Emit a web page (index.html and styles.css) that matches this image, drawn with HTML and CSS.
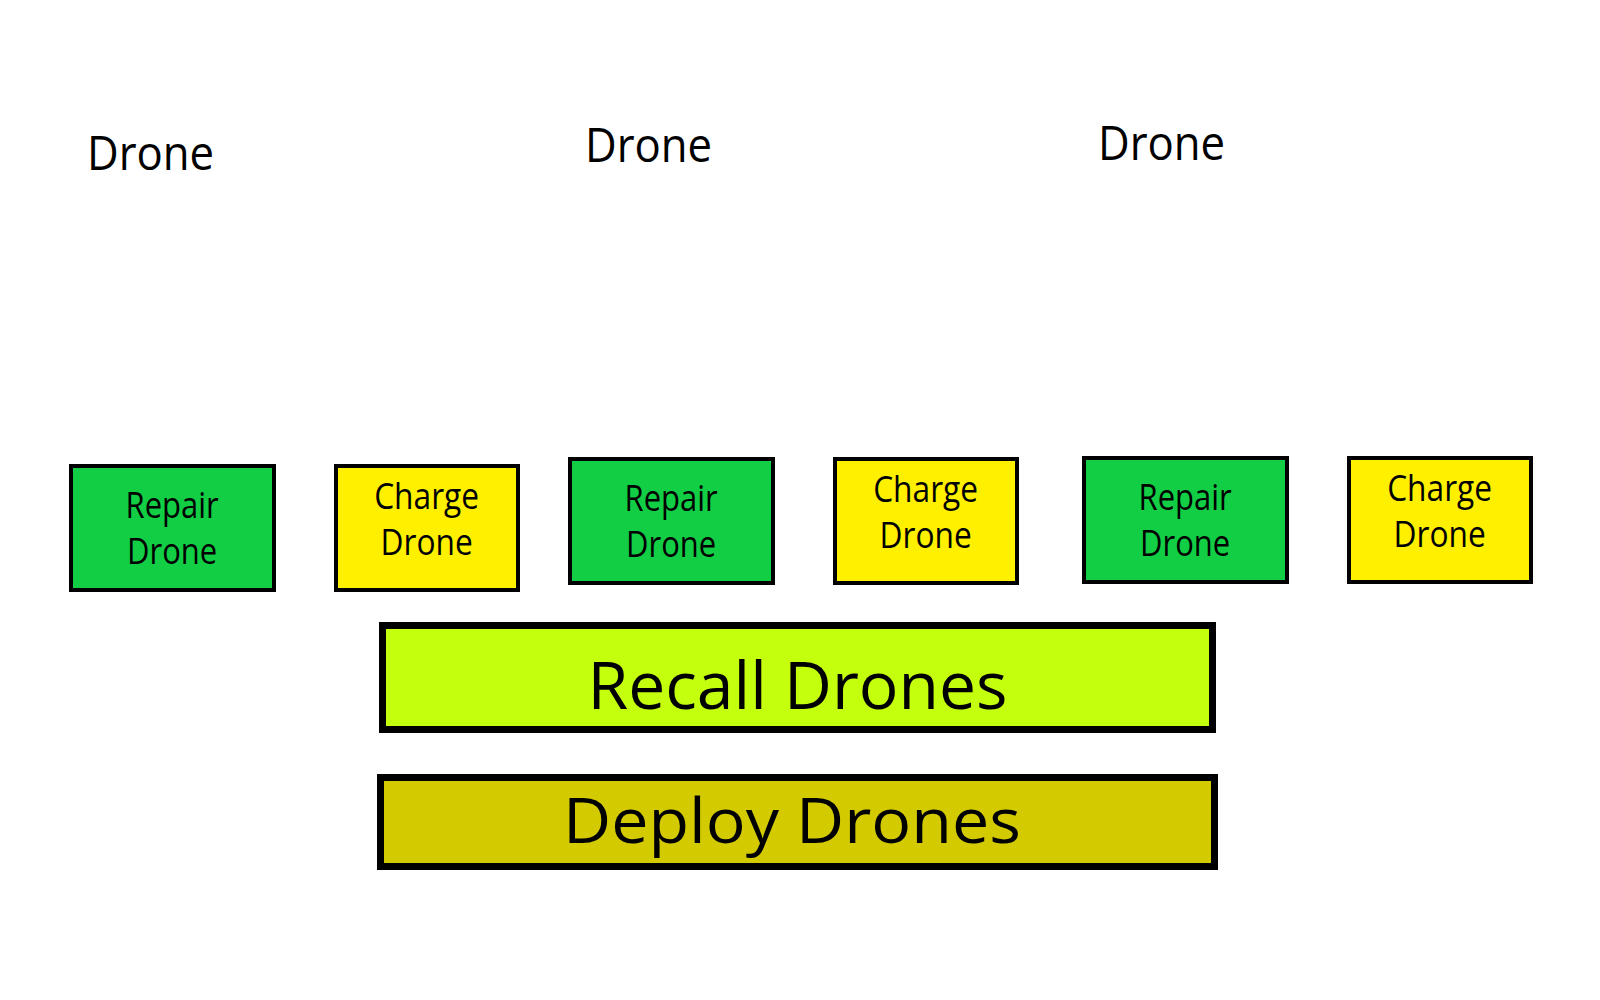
FILE: index.html
```html
<!DOCTYPE html>
<html lang="en">
<head>
    <meta charset="UTF-8">
    <meta name="viewport" content="width=device-width, initial-scale=1.0">
    <title>Drones</title>
    <link rel="stylesheet" href="styles.css">
</head>
<body>

    <div id="fleet">
        <div class="squad squad-1">
            <h2 class="squad-name"><span>Drone</span></h2>
            <div class="squad-actions">
                <button class="btn-repair"><span>Repair<br>Drone</span></button>
                <button class="btn-charge"><span>Charge<br>Drone</span></button>
            </div>
        </div>
        <div class="squad squad-2">
            <h2 class="squad-name"><span>Drone</span></h2>
            <div class="squad-actions">
                <button class="btn-repair"><span>Repair<br>Drone</span></button>
                <button class="btn-charge"><span>Charge<br>Drone</span></button>
            </div>
        </div>
        <div class="squad squad-3">
            <h2 class="squad-name"><span>Drone</span></h2>
            <div class="squad-actions">
                <button class="btn-repair"><span>Repair<br>Drone</span></button>
                <button class="btn-charge"><span>Charge<br>Drone</span></button>
            </div>
        </div>
    </div>

    <div id="commands">
        <button id="recall"><span>Recall Drones</span></button>
        <button id="deploy"><span>Deploy Drones</span></button>
    </div>

</body>
</html>
```

FILE: styles.css
```css
body {
    margin: 0;
    font-family: "Open Sans", "Liberation Sans", sans-serif;
    background-color: white;
    color: black;
}

button {
    font-family: inherit;
    color: black;
    border: 4px solid black;
    box-sizing: border-box;
    padding: 0;
    cursor: pointer;
}

button span {
    display: inline-block;
}

#fleet {
    display: grid;
    grid-template-columns: 499px 514px 1fr;
    padding-left: 69px;
}

.squad-name {
    margin: 0;
    font-size: 48px;
    font-weight: normal;
    line-height: 48px;
}

.squad-name span {
    display: inline-block;
    transform: scaleX(0.91);
    transform-origin: left center;
}

.squad-actions {
    display: flex;
    gap: 58px;
}

.squad-1 { padding-top: 128px; }
.squad-1 .squad-name { margin-left: 18px; margin-bottom: 288px; }

.squad-2 { padding-top: 120px; }
.squad-2 .squad-name { margin-left: 17px; margin-bottom: 289px; }

.squad-3 { padding-top: 118px; }
.squad-3 .squad-name { margin-left: 16px; margin-bottom: 290px; }

.btn-repair, .btn-charge {
    height: 128px;
    font-size: 36px;
    line-height: 46px;
    display: flex;
    align-items: center;
    justify-content: center;
    text-align: center;
}

.btn-repair span {
    transform: scaleX(0.86);
}

.btn-charge span {
    transform: scaleX(0.88);
}

.btn-repair {
    width: 207px;
    background-color: #11CE45;
}

.btn-charge {
    width: 186px;
    background-color: #FFF000;
    padding-bottom: 18px;
}

#commands {
    margin-left: 379px;
    margin-top: 30px;
    width: 837px;
    display: flex;
    flex-direction: column;
    gap: 41px;
}

#recall, #deploy {
    width: 100%;
    border-width: 7px;
    line-height: 1;
}

#recall {
    height: 111px;
    font-size: 66px;
    background-color: #C4FF0E;
    padding-top: 10px;
}

#deploy {
    width: 841px;
    margin-left: -2px;
    height: 96px;
    font-size: 62px;
    background-color: #D4CA00;
    padding-bottom: 6px;
    padding-right: 11px;
}

#deploy span {
    transform: scaleX(1.07);
}
```
